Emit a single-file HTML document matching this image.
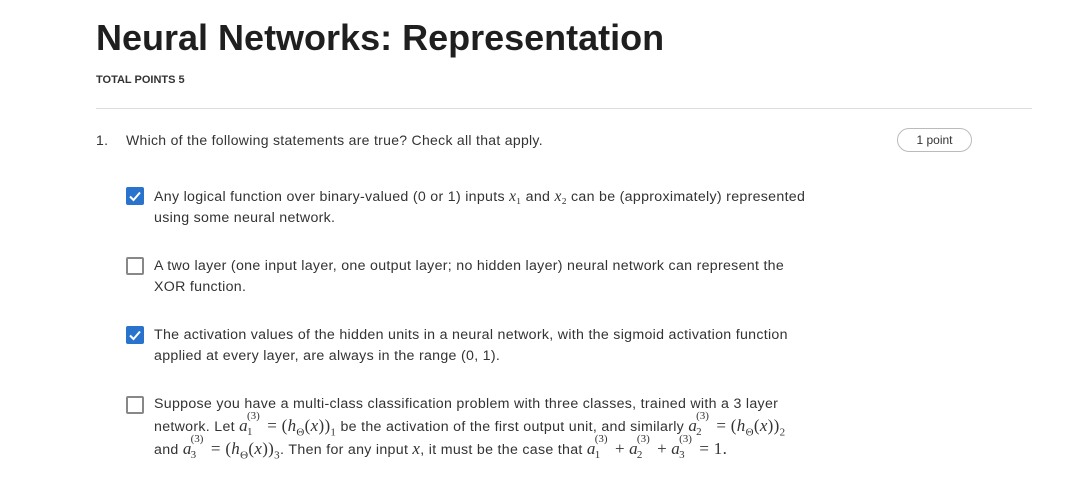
<!DOCTYPE html>
<html><head><style>
body{margin:0;width:1092px;height:501px;background:#fff;font-family:"Liberation Sans",sans-serif;color:#1f1f1f;position:relative;overflow:hidden}
.a{position:absolute}
h1{position:absolute;left:96px;top:17px;margin:0;font-size:36px;font-weight:bold;color:#1f1f1f;white-space:nowrap}
.tp{left:96px;top:74px;font-size:11px;font-weight:bold;color:#333}
.hr{left:96px;top:108px;width:936px;height:1px;background:#ddd}
.q{font-size:14px;color:#333;letter-spacing:0.3px}
.pill{left:897px;top:128px;width:75px;height:24px;border:1px solid #bbb;border-radius:12px;font-size:12px;text-align:center;line-height:22px;color:#333;box-sizing:border-box}
.cb{width:18px;height:18px;box-sizing:border-box;border-radius:2px}
.on{background:#2a73cc}
.off{border:2px solid #888}
.t{left:154px;width:720px;font-size:14.2px;line-height:21px;color:#333;white-space:nowrap;letter-spacing:0.3px}
.m{font-family:"Liberation Serif",serif;font-size:15.5px;letter-spacing:0}
.k .m{font-size:17px;letter-spacing:0.3px}
.ss{display:inline-block;position:relative;width:15px;height:10px;vertical-align:baseline}
.ss b{position:absolute;left:-1px;font-weight:normal;font-size:11px;font-family:"Liberation Serif",serif;letter-spacing:0}
.ss .u{top:-15px}.ss .d{top:1px}
sub{font-size:11px;line-height:0}
</style></head><body>
<h1>Neural Networks: Representation</h1>
<div class="a tp">TOTAL POINTS 5</div>
<div class="a hr"></div>
<div class="a q" style="left:96px;top:132px">1.</div>
<div class="a q" style="left:126px;top:132px">Which of the following statements are true? Check all that apply.</div>
<div class="a pill">1 point</div>

<div class="a cb on" style="left:126px;top:187px"><svg width="18" height="18"><path d="M4 9.5l3.5 3.5 6.5-7.5" stroke="#fff" stroke-width="2" fill="none"/></svg></div>
<div class="a t" style="top:186px">Any logical function over binary-valued (0 or 1) inputs <i class="m">x</i><span class="m">₁</span> and <i class="m">x</i><span class="m">₂</span> can be (approximately) represented<br>using some neural network.</div>

<div class="a cb off" style="left:126px;top:257px"></div>
<div class="a t" style="top:256px">A two layer (one input layer, one output layer; no hidden layer) neural network can represent the<br>XOR function.</div>

<div class="a cb on" style="left:126px;top:326px"><svg width="18" height="18"><path d="M4 9.5l3.5 3.5 6.5-7.5" stroke="#fff" stroke-width="2" fill="none"/></svg></div>
<div class="a t" style="top:325px">The activation values of the hidden units in a neural network, with the sigmoid activation function<br>applied at every layer, are always in the range (0, 1).</div>

<div class="a cb off" style="left:126px;top:396px"></div>
<div class="a t k" style="top:394px">Suppose you have a multi-class classification problem with three classes, trained with a 3 layer<br>network. Let <i class="m">a</i><span class="ss"><b class="u">(3)</b><b class="d">1</b></span> <span class="m">= (<i>h</i><sub>Θ</sub>(<i>x</i>))<sub>1</sub></span> be the activation of the first output unit, and similarly <i class="m">a</i><span class="ss"><b class="u">(3)</b><b class="d">2</b></span> <span class="m">= (<i>h</i><sub>Θ</sub>(<i>x</i>))<sub>2</sub></span><br>and <i class="m">a</i><span class="ss"><b class="u">(3)</b><b class="d">3</b></span> <span class="m">= (<i>h</i><sub>Θ</sub>(<i>x</i>))<sub>3</sub></span>. Then for any input <i class="m">x</i>, it must be the case that <i class="m">a</i><span class="ss"><b class="u">(3)</b><b class="d">1</b></span> <span class="m">+</span> <i class="m">a</i><span class="ss"><b class="u">(3)</b><b class="d">2</b></span> <span class="m">+</span> <i class="m">a</i><span class="ss"><b class="u">(3)</b><b class="d">3</b></span> <span class="m">= 1.</span></div>
</body></html>
